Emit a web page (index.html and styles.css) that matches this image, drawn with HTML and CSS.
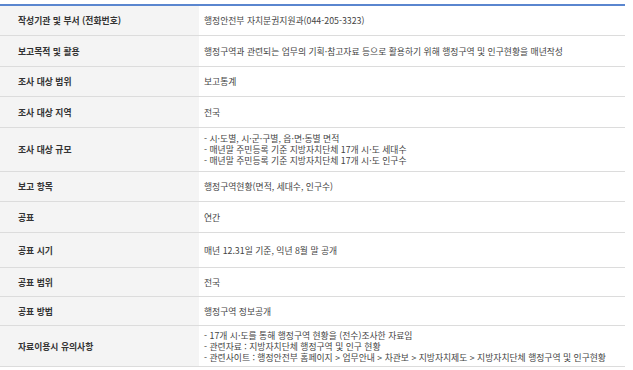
FILE: index.html
```html
<!DOCTYPE html>
<html lang="ko">
<head>
<meta charset="utf-8">
<link rel="stylesheet" href="styles.css">
</head>
<body>
<table class="info">
  <tbody>
    <tr><th>작성기관 및 부서 (전화번호)</th><td>행정안전부 자치분권지원과(044-205-3323)</td></tr>
    <tr><th>보고목적 및 활용</th><td>행정구역과 관련되는 업무의 기획·참고자료 등으로 활용하기 위해 행정구역 및 인구현황을 매년작성</td></tr>
    <tr><th>조사 대상 범위</th><td>보고통계</td></tr>
    <tr><th>조사 대상 지역</th><td>전국</td></tr>
    <tr><th>조사 대상 규모</th><td>- 시·도별, 시·군·구별, 읍·면·동별 면적<br>- 매년말 주민등록 기준 지방자치단체 17개 시·도 세대수<br>- 매년말 주민등록 기준 지방자치단체 17개 시·도 인구수</td></tr>
    <tr><th>보고 항목</th><td>행정구역현황(면적, 세대수, 인구수)</td></tr>
    <tr><th>공표</th><td>연간</td></tr>
    <tr><th>공표 시기</th><td>매년 12.31일 기준, 익년 8월 말 공개</td></tr>
    <tr><th>공표 범위</th><td>전국</td></tr>
    <tr><th>공표 방법</th><td>행정구역 정보공개</td></tr>
    <tr><th>자료이용시 유의사항</th><td>- 17개 시·도를 통해 행정구역 현황을 (전수)조사한 자료임<br>- 관련자료 : 지방자치단체 행정구역 및 인구 현황<br>- 관련사이트 : 행정안전부 홈페이지 &gt; 업무안내 &gt; 차관보 &gt; 지방자치제도 &gt; 지방자치단체 행정구역 및 인구현황</td></tr>
  </tbody>
</table>
</body>
</html>
```

FILE: styles.css
```css
html, body {
  margin: 0;
  padding: 0;
  background: #ffffff;
}
body {
  padding-top: 4px;
  font-family: "Noto Sans CJK KR", "Noto Sans", sans-serif;
  font-size: 8.8px;
}
.info {
  width: 625px;
  border-collapse: collapse;
  border-top: 2px solid #5a86cf;
  table-layout: fixed;
}
.info th, .info td {
  border-bottom: 1px solid #dcdcdc;
  height: 29px;
  padding: 0;
  line-height: 11px;
  text-align: left;
  vertical-align: middle;
}
.info th {
  width: 199px;
  background: #f4f4f4;
  color: #333333;
  font-weight: 700;
  padding-left: 18px;
  box-sizing: border-box;
}
.info td {
  color: #444444;
  font-weight: 400;
  padding-left: 5px;
}
.info tr:nth-child(2) > *,
.info tr:nth-child(4) > *,
.info tr:nth-child(7) > * { height: 30px; }
.info tr:nth-child(5) > * { height: 43px; }
.info tr:nth-child(8) > * { height: 34px; }
.info tr:nth-child(9) > *,
.info tr:nth-child(10) > * { height: 28px; }
.info tr:nth-child(11) > * { height: 40px; }
```
